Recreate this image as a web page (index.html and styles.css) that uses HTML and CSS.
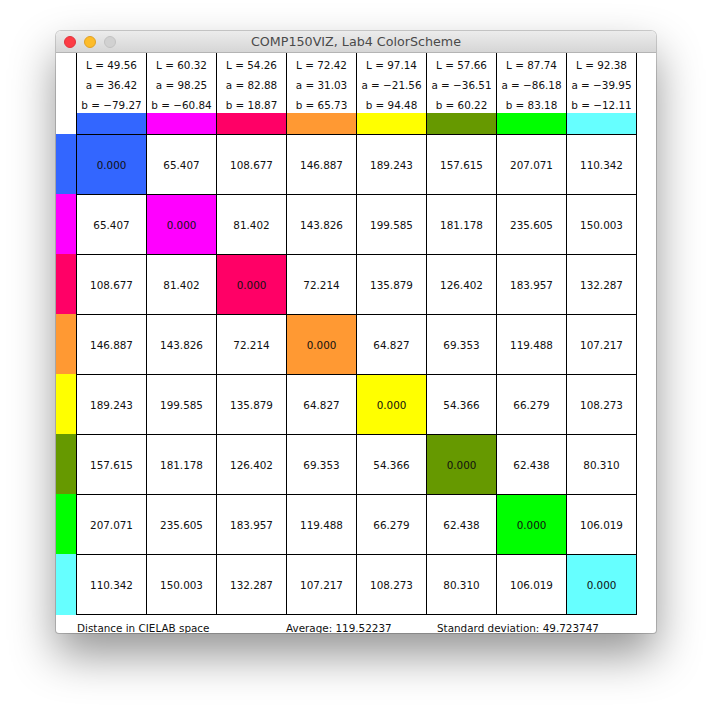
FILE: index.html
```html
<!DOCTYPE html>
<html>
<head>
<meta charset="utf-8">
<title>COMP150VIZ, Lab4 ColorScheme</title>
<link rel="stylesheet" href="styles.css">
</head>
<body>
<div class="window">
  <div class="titlebar">
    <div class="lights">
      <span class="light red"></span>
      <span class="light yellow"></span>
      <span class="light grey"></span>
    </div>
    <div class="title">COMP150VIZ, Lab4 ColorScheme</div>
    <div></div>
  </div>
  <div class="content">
    <div class="matrix">
      <div class="corner"></div>
      <div class="hd"><div class="vals"><div>L = 49.56</div><div>a = 36.42</div><div>b = −79.27</div></div><div class="band c1"></div></div>
      <div class="hd"><div class="vals"><div>L = 60.32</div><div>a = 98.25</div><div>b = −60.84</div></div><div class="band c2"></div></div>
      <div class="hd"><div class="vals"><div>L = 54.26</div><div>a = 82.88</div><div>b = 18.87</div></div><div class="band c3"></div></div>
      <div class="hd"><div class="vals"><div>L = 72.42</div><div>a = 31.03</div><div>b = 65.73</div></div><div class="band c4"></div></div>
      <div class="hd"><div class="vals"><div>L = 97.14</div><div>a = −21.56</div><div>b = 94.48</div></div><div class="band c5"></div></div>
      <div class="hd"><div class="vals"><div>L = 57.66</div><div>a = −36.51</div><div>b = 60.22</div></div><div class="band c6"></div></div>
      <div class="hd"><div class="vals"><div>L = 87.74</div><div>a = −86.18</div><div>b = 83.18</div></div><div class="band c7"></div></div>
      <div class="hd end"><div class="vals"><div>L = 92.38</div><div>a = −39.95</div><div>b = −12.11</div></div><div class="band c8"></div></div>

      <div class="side c1"></div>
      <div class="cell c1">0.000</div><div class="cell">65.407</div><div class="cell">108.677</div><div class="cell">146.887</div><div class="cell">189.243</div><div class="cell">157.615</div><div class="cell">207.071</div><div class="cell end">110.342</div>

      <div class="side c2"></div>
      <div class="cell">65.407</div><div class="cell c2">0.000</div><div class="cell">81.402</div><div class="cell">143.826</div><div class="cell">199.585</div><div class="cell">181.178</div><div class="cell">235.605</div><div class="cell end">150.003</div>

      <div class="side c3"></div>
      <div class="cell">108.677</div><div class="cell">81.402</div><div class="cell c3">0.000</div><div class="cell">72.214</div><div class="cell">135.879</div><div class="cell">126.402</div><div class="cell">183.957</div><div class="cell end">132.287</div>

      <div class="side c4"></div>
      <div class="cell">146.887</div><div class="cell">143.826</div><div class="cell">72.214</div><div class="cell c4">0.000</div><div class="cell">64.827</div><div class="cell">69.353</div><div class="cell">119.488</div><div class="cell end">107.217</div>

      <div class="side c5"></div>
      <div class="cell">189.243</div><div class="cell">199.585</div><div class="cell">135.879</div><div class="cell">64.827</div><div class="cell c5">0.000</div><div class="cell">54.366</div><div class="cell">66.279</div><div class="cell end">108.273</div>

      <div class="side c6"></div>
      <div class="cell">157.615</div><div class="cell">181.178</div><div class="cell">126.402</div><div class="cell">69.353</div><div class="cell">54.366</div><div class="cell c6">0.000</div><div class="cell">62.438</div><div class="cell end">80.310</div>

      <div class="side c7"></div>
      <div class="cell">207.071</div><div class="cell">235.605</div><div class="cell">183.957</div><div class="cell">119.488</div><div class="cell">66.279</div><div class="cell">62.438</div><div class="cell c7">0.000</div><div class="cell end">106.019</div>

      <div class="side c8"></div>
      <div class="cell bottom">110.342</div><div class="cell bottom">150.003</div><div class="cell bottom">132.287</div><div class="cell bottom">107.217</div><div class="cell bottom">108.273</div><div class="cell bottom">80.310</div><div class="cell bottom">106.019</div><div class="cell bottom end c8">0.000</div>
    </div>
    <div class="footer">
      <span>Distance in CIELAB space</span>
      <span>Average: 119.52237</span>
      <span>Standard deviation: 49.723747</span>
    </div>
  </div>
</div>
</body>
</html>
```

FILE: styles.css
```css
html, body {
  margin: 0;
  padding: 0;
  background: #ffffff;
}

body {
  font-family: "DejaVu Sans", "Noto Sans", sans-serif;
  font-size: 10.4px;
  color: #111111;
  min-height: 714px;
  padding-top: 31px;
  padding-bottom: 1px;
  box-sizing: border-box;
}

.window {
  width: 600px;
  margin: 0 0 0 56px;
  border-radius: 5px 5px 3px 3px;
  overflow: hidden;
  background: #ffffff;
  box-shadow: 0 22px 45px rgba(0, 0, 0, 0.42), 0 0 0 1px rgba(0, 0, 0, 0.18);
}

.titlebar {
  height: 22px;
  box-sizing: border-box;
  display: grid;
  grid-template-columns: 1fr auto 1fr;
  align-items: center;
  background: linear-gradient(#ececec, #d6d6d6);
  border-bottom: 1px solid #b4b4b4;
}

.lights {
  display: flex;
  gap: 8px;
  padding-left: 8px;
}

.light {
  width: 12px;
  height: 12px;
  border-radius: 50%;
  box-sizing: border-box;
}

.light.red { background: #fc3c45; border: 1px solid #e0333c; }
.light.yellow { background: #fdbc2a; border: 1px solid #e0a124; }
.light.grey { background: #d1d1d1; border: 1px solid #c2c2c2; }

.title {
  font-family: "DejaVu Sans", sans-serif;
  font-size: 12.7px;
  color: #4a4a4a;
}

.content {
  height: 580px;
  overflow: hidden;
}

.matrix {
  display: grid;
  grid-template-columns: 20px repeat(7, 70px) 71px;
  grid-template-rows: 81px repeat(7, 60px) 61px;
}

.corner {
  background: #ffffff;
}

.hd {
  display: flex;
  flex-direction: column;
  border-left: 1px solid #000;
}

.vals {
  height: 60px;
  box-sizing: border-box;
  padding-top: 2px;
  line-height: 20px;
  text-align: center;
  white-space: nowrap;
}

.band {
  height: 21px;
}

.cell {
  border-left: 1px solid #000;
  border-top: 1px solid #000;
  display: flex;
  align-items: center;
  justify-content: center;
}

.end { border-right: 1px solid #000; }
.bottom { border-bottom: 1px solid #000; }

.c1 { background: #3366ff; }
.c2 { background: #ff00ff; }
.c3 { background: #ff0066; }
.c4 { background: #ff9933; }
.c5 { background: #ffff00; }
.c6 { background: #669900; }
.c7 { background: #00ff00; }
.c8 { background: #66ffff; }

.footer {
  height: 19px;
  box-sizing: border-box;
  padding: 7px 0 0 21px;
  line-height: 13px;
  display: grid;
  grid-template-columns: 209px 151px auto;
  white-space: nowrap;
}
```
